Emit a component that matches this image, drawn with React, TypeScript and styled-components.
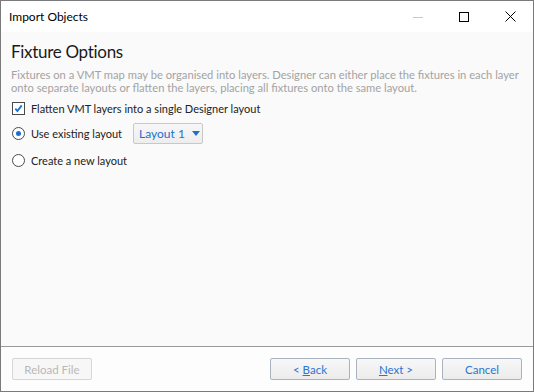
import styled, { createGlobalStyle } from "styled-components";

const GlobalStyle = createGlobalStyle`
  html, body {
    margin: 0;
    padding: 0;
    background: #ffffff;
  }
  body {
    font-family: Lato, "Noto Sans", sans-serif;
  }
`;

const Window = styled.div`
  width: 534px;
  height: 392px;
  box-sizing: border-box;
  border: 1px solid #7a7a7a;
  display: flex;
  flex-direction: column;
  background: #ffffff;
`;

const TitleBar = styled.div`
  height: 31px;
  display: flex;
  align-items: center;
  padding-left: 8px;
  font-size: 12px;
  color: #000;
`;

const TitleText = styled.div`
  flex: 1;
`;

const TitleButton = styled.div`
  width: 46px;
  height: 31px;
  display: flex;
  align-items: center;
  justify-content: center;
`;

const Body = styled.div`
  flex: 1;
  background: #fafafa;
  padding: 8px 10px;
  display: flex;
  flex-direction: column;
`;

const Heading = styled.h1`
  margin: 0;
  font-weight: normal;
  font-size: 17px;
  letter-spacing: -0.3px;
  line-height: 24px;
  color: #1a1a1a;
`;

const Description = styled.p`
  margin: 4px 0 0;
  font-size: 11.2px;
  line-height: 13px;
  color: #a3a3a3;
  white-space: nowrap;
`;

const Options = styled.div`
  display: flex;
  flex-direction: column;
  margin-top: 2px;
`;

const Option = styled.label<{ $h: number }>`
  display: flex;
  align-items: center;
  gap: 6px;
  font-size: 11px;
  color: #222;
  white-space: nowrap;
  height: ${(p) => p.$h}px;
`;

const CheckBox = styled.span`
  width: 11px;
  height: 11px;
  border: 1px solid #4a4a4a;
  background: #fff;
  display: flex;
  align-items: center;
  justify-content: center;
  margin-left: 1px;
`;

const Radio = styled.span<{ $checked?: boolean }>`
  width: 11px;
  height: 11px;
  border: 1px solid #4a4a4a;
  border-radius: 50%;
  background: #fff;
  display: flex;
  align-items: center;
  justify-content: center;
  margin-left: 1px;

  &::after {
    content: "";
    display: ${(p) => (p.$checked ? "block" : "none")};
    width: 5px;
    height: 5px;
    border-radius: 50%;
    background: #1a6fd1;
  }
`;

const Dropdown = styled.div`
  margin-left: 5px;
  height: 21px;
  width: 70px;
  box-sizing: border-box;
  border: 1px solid #c8c8c8;
  border-radius: 2px;
  background: linear-gradient(#f7f7f7, #ededed);
  display: flex;
  align-items: center;
  padding-left: 5px;
  gap: 7px;
  font-size: 12px;
  color: #1f6fce;
`;

const Caret = styled.span`
  width: 0;
  height: 0;
  border-left: 4px solid transparent;
  border-right: 4px solid transparent;
  border-top: 5px solid #1f6fce;
`;

const Footer = styled.div`
  height: 44px;
  border-top: 1px solid #9a9a9a;
  background: #fdfdfd;
  display: flex;
  align-items: center;
  padding: 0 11px;
  gap: 6px;
`;

const Spacer = styled.div`
  flex: 1;
`;

const Button = styled.button<{ $disabled?: boolean }>`
  width: 80px;
  height: 22px;
  box-sizing: border-box;
  border: 1px solid ${(p) => (p.$disabled ? "#d6d6d6" : "#a9b3c0")};
  border-radius: 2px;
  background: ${(p) =>
    p.$disabled ? "#f7f7f7" : "linear-gradient(#f7f7f7, #ececec)"};
  font-family: Lato, "Noto Sans", sans-serif;
  font-size: 11.5px;
  color: ${(p) => (p.$disabled ? "#b8b8b8" : "#2a74d0")};
  padding: 0;

  u {
    text-decoration: underline;
  }
`;

export default function App() {
  return (
    <>
      <GlobalStyle />
      <Window>
        <TitleBar>
          <TitleText>Import Objects</TitleText>
          <TitleButton>
            <svg width="10" height="10" viewBox="0 0 10 10">
              <path d="M0 5.5h10" stroke="#c8c8c8" strokeWidth="1" />
            </svg>
          </TitleButton>
          <TitleButton>
            <svg width="10" height="10" viewBox="0 0 10 10">
              <rect x="0.5" y="0.5" width="9" height="9" fill="none" stroke="#000" />
            </svg>
          </TitleButton>
          <TitleButton>
            <svg width="11" height="11" viewBox="0 0 11 11">
              <path d="M0.5 0.5l10 10M10.5 0.5l-10 10" stroke="#000" strokeWidth="1" />
            </svg>
          </TitleButton>
        </TitleBar>
        <Body>
          <Heading>Fixture Options</Heading>
          <Description>
            Fixtures on a VMT map may be organised into layers. Designer can either place the fixtures in each layer
            <br />
            onto separate layouts or flatten the layers, placing all fixtures onto the same layout.
          </Description>
          <Options>
            <Option $h={24}>
              <CheckBox>
                <svg width="9" height="9" viewBox="0 0 10 10">
                  <path d="M1.5 5.2l2.3 2.6L8.6 1.5" fill="none" stroke="#1a6fd1" strokeWidth="2" />
                </svg>
              </CheckBox>
              Flatten VMT layers into a single Designer layout
            </Option>
            <Option $h={26}>
              <Radio $checked />
              Use existing layout
              <Dropdown>
                Layout 1
                <Caret />
              </Dropdown>
            </Option>
            <Option $h={28}>
              <Radio />
              Create a new layout
            </Option>
          </Options>
        </Body>
        <Footer>
          <Button $disabled>Reload File</Button>
          <Spacer />
          <Button>
            &lt; <u>B</u>ack
          </Button>
          <Button>
            <u>N</u>ext &gt;
          </Button>
          <Button>Cancel</Button>
        </Footer>
      </Window>
    </>
  );
}
